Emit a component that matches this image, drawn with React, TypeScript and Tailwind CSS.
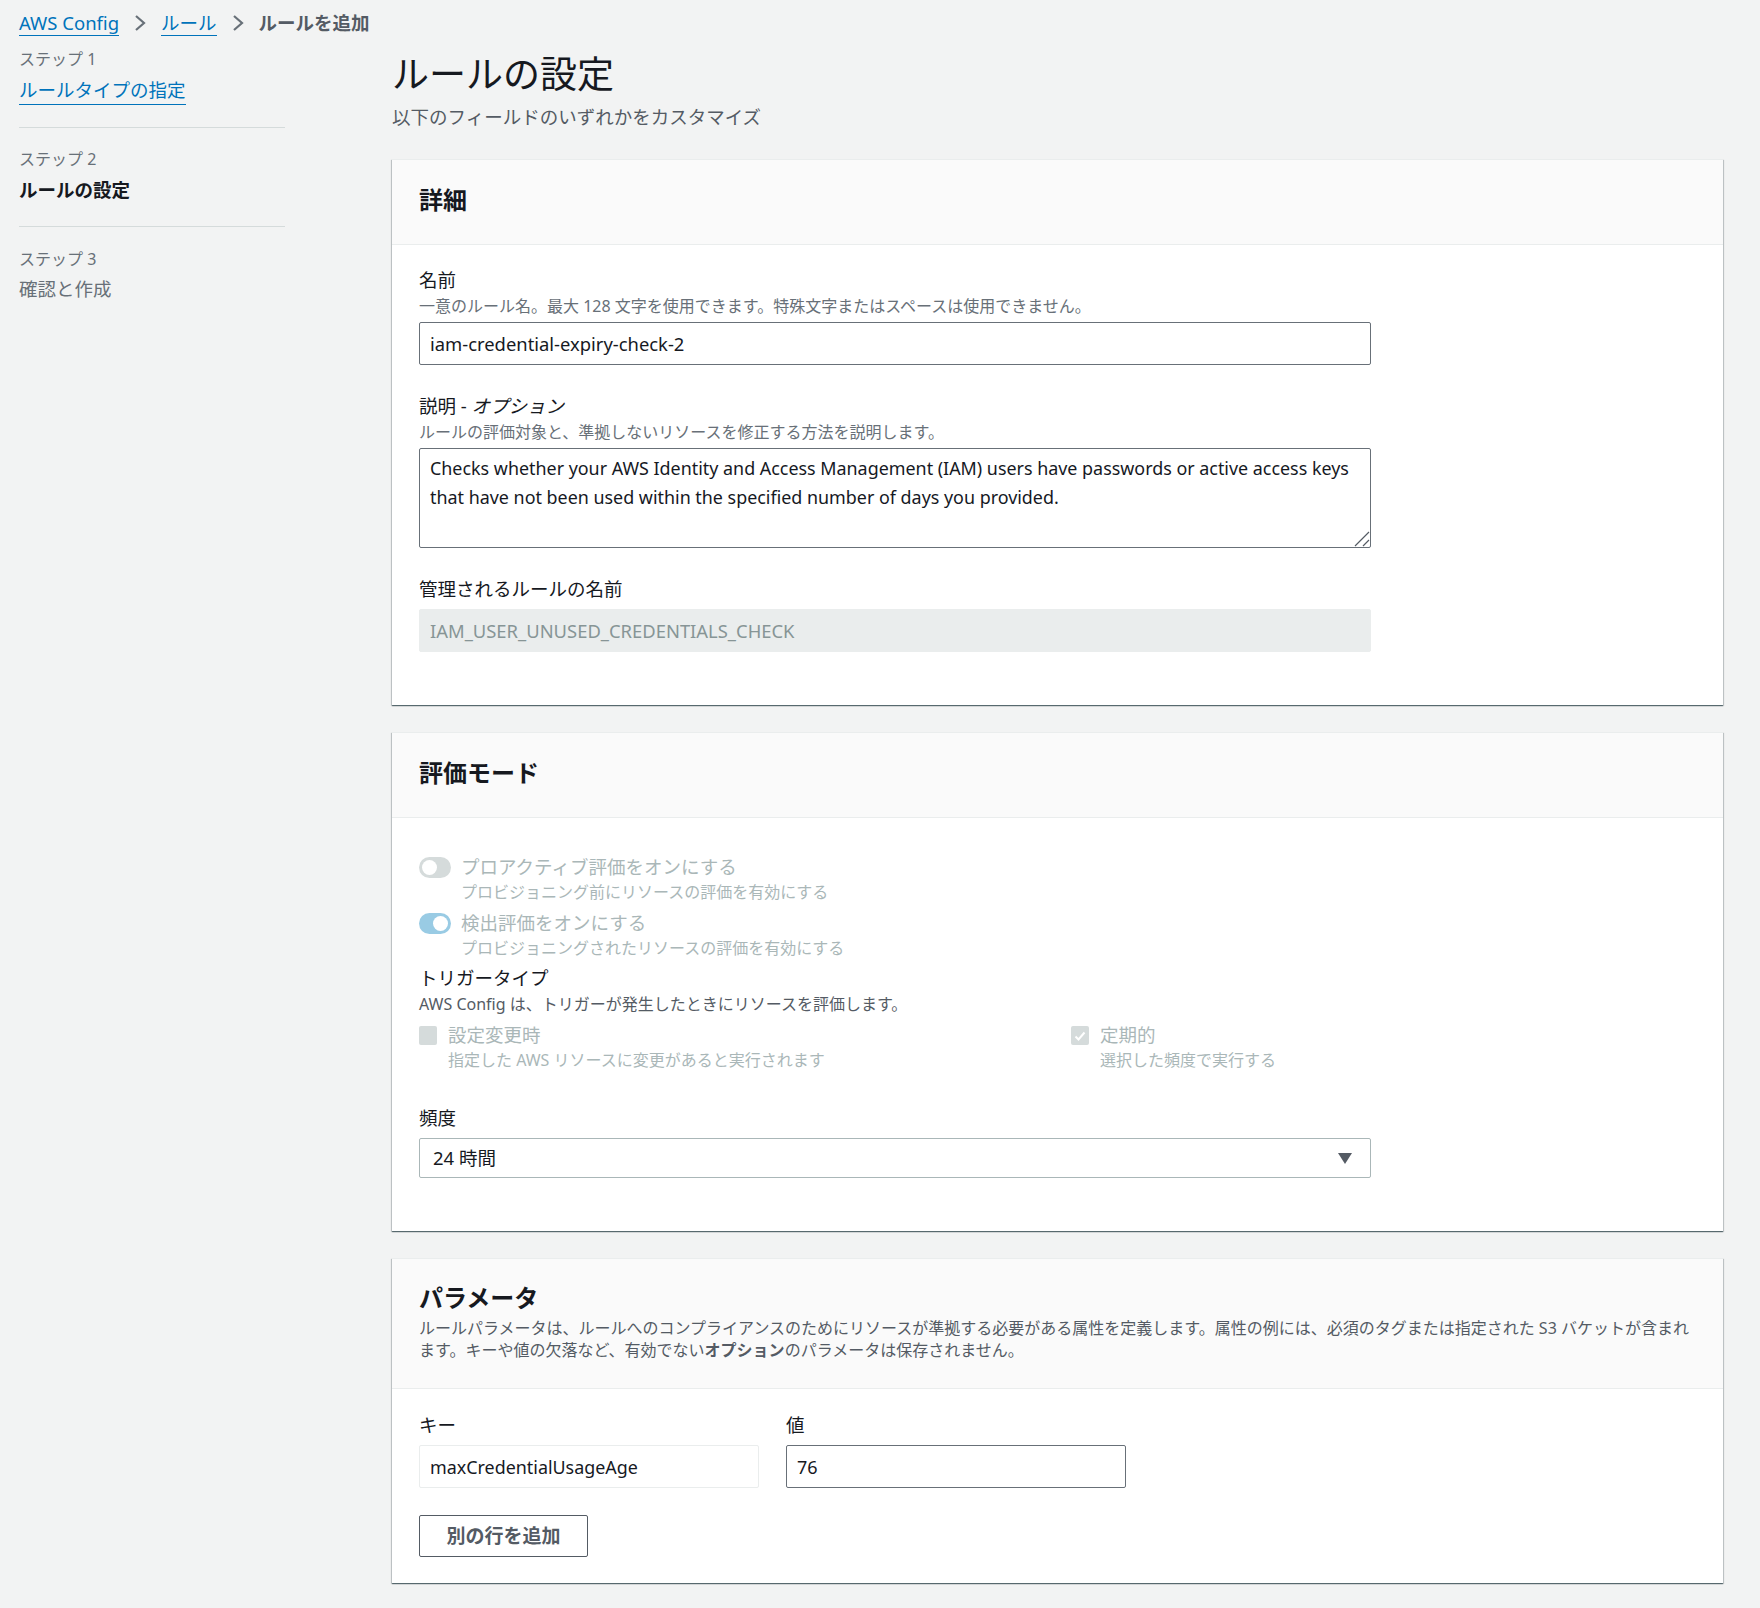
const fieldCls = "block w-full h-[43px] rounded-[2px] border px-[10px] outline-none";
const labelCls = "block h-[24px] text-[18.5px] leading-[24px]";

function Step({ label, name, kind, className }: { label: string; name: string; kind: "link" | "active" | "idle"; className?: string }) {
  return (
    <div className={className}>
      <div className="h-[22px] text-[16px] leading-[22px] text-[#687078]">{label}</div>
      <div className={`${kind === "idle" ? "mt-[6px]" : "mt-[7px]"} h-[26px] text-[18.5px] leading-[26px]`}>
        {kind === "link" && <a className="text-[#0073bb] border-b-[1.5px] border-[#0073bb] pb-[2px]">{name}</a>}
        {kind === "active" && <span className="font-bold text-[#16191f]">{name}</span>}
        {kind === "idle" && <span className="text-[#687078]">{name}</span>}
      </div>
    </div>
  );
}

function Chevron() {
  return (
    <svg width="12" height="18" viewBox="0 0 12 18" fill="none" className="shrink-0">
      <path d="M2 2l8 7-8 7" stroke="#687078" strokeWidth="2.2" />
    </svg>
  );
}

function Card({ children }: { children: React.ReactNode }) {
  return (
    <section className="bg-white border-t border-[#eaeded] shadow-[0_1px_1px_0_rgba(0,28,36,0.5),1px_1px_1px_0_rgba(0,28,36,0.15),-1px_1px_1px_0_rgba(0,28,36,0.15)]">
      {children}
    </section>
  );
}

function Toggle({ on }: { on?: boolean }) {
  return (
    <span className={`flex items-center w-[32px] h-[21px] rounded-full px-[3px] shrink-0 ${on ? "bg-[#99cbe4] justify-end" : "bg-[#d5dbdb] justify-start"}`}>
      <span className="w-[15px] h-[15px] rounded-full bg-white" />
    </span>
  );
}

function ToggleRow({ on, title, sub, className }: { on?: boolean; title: string; sub: string; className?: string }) {
  return (
    <div className={`flex gap-[10px] ${className ?? ""}`}>
      <div className="pt-[2px]"><Toggle on={on} /></div>
      <div>
        <div className="h-[24px] text-[18.5px] leading-[24px] text-[#aab7b8]">{title}</div>
        <div className="mt-[3px] h-[20px] text-[16px] leading-[20px] text-[#aab7b8]">{sub}</div>
      </div>
    </div>
  );
}

function Check({ checked, title, sub }: { checked?: boolean; title: string; sub: string }) {
  return (
    <div className="flex gap-[11px]">
      <span className="mt-[3px] flex items-center justify-center w-[18px] h-[19px] rounded-[2px] bg-[#d5dbdb] shrink-0">
        {checked && (
          <svg width="14" height="14" viewBox="0 0 14 14" fill="none">
            <path d="M2.5 7.5l3 3 6-7" stroke="#fff" strokeWidth="2" />
          </svg>
        )}
      </span>
      <div>
        <div className="h-[24px] text-[18.5px] leading-[24px] text-[#aab7b8]">{title}</div>
        <div className="mt-[3px] h-[20px] text-[16px] leading-[20px] text-[#aab7b8]">{sub}</div>
      </div>
    </div>
  );
}

export default function App() {
  return (
    <div className="h-[1608px] overflow-hidden bg-[#f2f3f3] text-[#16191f] font-['Noto_Sans','Noto_Sans_CJK_JP',sans-serif]">
      <nav className="flex items-center h-[36px] pl-[19px] pt-[10px] text-[18.5px] leading-[24px]">
        <a className="text-[#0073bb] border-b-[1.5px] border-[#0073bb]">AWS Config</a>
        <span className="ml-[15px] mr-[15px]"><Chevron /></span>
        <a className="text-[#0073bb] border-b-[1.5px] border-[#0073bb]">ルール</a>
        <span className="ml-[15px] mr-[15px]"><Chevron /></span>
        <span className="font-bold text-[#545b64]">ルールを追加</span>
      </nav>

      <div className="flex">
        <aside className="w-[266px] ml-[19px] mr-[107px] shrink-0 pt-[12px]">
          <Step label="ステップ 1" name="ルールタイプの指定" kind="link" className="border-b border-[#d5dbdb] pb-[24px] mb-[20px]" />
          <Step label="ステップ 2" name="ルールの設定" kind="active" className="border-b border-[#d5dbdb] pb-[23px] mb-[21px]" />
          <Step label="ステップ 3" name="確認と作成" kind="idle" />
        </aside>

        <main className="w-[1331px]">
          <h1 className="mt-[16px] h-[44px] text-[37px] leading-[44px] font-normal">ルールの設定</h1>
          <p className="mt-[8px] h-[26px] mb-[29px] text-[18.5px] leading-[26px] text-[#545b64]">以下のフィールドのいずれかをカスタマイズ</p>

          <Card>
            <div className="h-[85px] pt-[26px] px-[27px] bg-[#fafafa] border-b border-[#eaeded]">
              <h2 className="text-[24px] leading-[28px] font-bold">詳細</h2>
            </div>
            <div className="px-[27px] pt-[23px] pb-[53px]">
              <div className="w-[952px]">
                <label className={labelCls}>名前</label>
                <div className="mt-[4px] h-[20px] text-[16px] leading-[20px] text-[#687078]">一意のルール名。最大 128 文字を使用できます。特殊文字またはスペースは使用できません。</div>
                <input readOnly value="iam-credential-expiry-check-2" className={`${fieldCls} mt-[6px] bg-white border-[#687078] text-[18.4px] text-[#16191f]`} />

                <label className={`${labelCls} mt-[29px]`}>説明 - <i>オプション</i></label>
                <div className="mt-[4px] h-[20px] text-[16px] leading-[20px] text-[#687078]">ルールの評価対象と、準拠しないリソースを修正する方法を説明します。</div>
                <div className="relative mt-[6px]">
                  <textarea
                    readOnly
                    value="Checks whether your AWS Identity and Access Management (IAM) users have passwords or active access keys that have not been used within the specified number of days you provided."
                    className="block w-full h-[100px] resize-none rounded-[2px] border border-[#687078] px-[10px] pt-[5px] text-[17.9px] leading-[29px] outline-none"
                  />
                  <svg width="16" height="16" viewBox="0 0 16 16" fill="none" className="absolute right-[1px] bottom-[1px]">
                    <path d="M1 15L15 1M9 15l6-6" stroke="#545b64" strokeWidth="1.2" />
                  </svg>
                </div>

                <label className={`${labelCls} mt-[29px]`}>管理されるルールの名前</label>
                <input readOnly value="IAM_USER_UNUSED_CREDENTIALS_CHECK" className={`${fieldCls} mt-[8px] bg-[#eaeded] border-[#eaeded] text-[18.4px] text-[#879596]`} />
              </div>
            </div>
          </Card>

          <div className="h-[27px]" />

          <Card>
            <div className="h-[85px] pt-[26px] px-[27px] bg-[#fafafa] border-b border-[#eaeded]">
              <h2 className="text-[24px] leading-[28px] font-bold">評価モード</h2>
            </div>
            <div className="px-[27px] pt-[37px] pb-[53px]">
              <div className="w-[952px]">
                <ToggleRow title="プロアクティブ評価をオンにする" sub="プロビジョニング前にリソースの評価を有効にする" />
                <ToggleRow on className="mt-[9px]" title="検出評価をオンにする" sub="プロビジョニングされたリソースの評価を有効にする" />
                <div className="mt-[8px] h-[24px] text-[18.5px] leading-[24px]">トリガータイプ</div>
                <div className="mt-[4px] h-[20px] text-[16px] leading-[20px] text-[#545b64]">AWS Config は、トリガーが発生したときにリソースを評価します。</div>
                <div className="mt-[9px] grid grid-cols-[652px_1fr]">
                  <Check title="設定変更時" sub="指定した AWS リソースに変更があると実行されます" />
                  <Check checked title="定期的" sub="選択した頻度で実行する" />
                </div>
                <div className="mt-[36px] h-[24px] text-[18.5px] leading-[24px]">頻度</div>
                <div className="mt-[8px] flex items-center justify-between h-[40px] rounded-[2px] border border-[#aab7b8] pl-[13px] pr-[18px] text-[18.5px]">
                  <span>24 時間</span>
                  <svg width="14" height="11" viewBox="0 0 14 11"><path d="M0 0h14L7 11z" fill="#545b64" /></svg>
                </div>
              </div>
            </div>
          </Card>

          <div className="h-[27px]" />

          <Card>
            <div className="h-[130px] pt-[25px] px-[27px] bg-[#fafafa] border-b border-[#eaeded]">
              <h2 className="text-[24px] leading-[28px] font-bold">パラメータ</h2>
              <p className="mt-[6px] text-[16px] leading-[21.5px] text-[#545b64]">
                ルールパラメータは、ルールへのコンプライアンスのためにリソースが準拠する必要がある属性を定義します。属性の例には、必須のタグまたは指定された S3 バケットが含まれ<br />
                ます。キーや値の欠落など、有効でない<b>オプション</b>のパラメータは保存されません。
              </p>
            </div>
            <div className="px-[27px] pt-[24px] pb-[26px]">
              <div className="grid grid-cols-[340px_340px] gap-x-[27px]">
                <div>
                  <label className={labelCls}>キー</label>
                  <input readOnly value="maxCredentialUsageAge" className={`${fieldCls} mt-[8px] border-[#eaeded] text-[17.9px] text-[#16191f]`} />
                </div>
                <div>
                  <label className={labelCls}>値</label>
                  <input readOnly value="76" className={`${fieldCls} mt-[8px] border-[#687078] text-[18px] text-[#16191f]`} />
                </div>
              </div>
              <button className="block mt-[27px] w-[169px] h-[42px] rounded-[2px] border border-[#545b64] bg-white text-[19px] font-bold text-[#545b64]">別の行を追加</button>
            </div>
          </Card>
        </main>
      </div>
    </div>
  );
}
